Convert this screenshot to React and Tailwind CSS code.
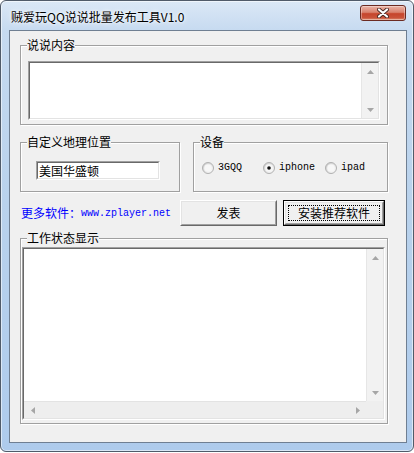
import React from "react";

const cjk = "font-['Noto_Sans_CJK_SC',sans-serif]";
const mono = "font-['Liberation_Mono','Noto_Sans_CJK_SC',monospace]";

function Arrow({ dir }) {
  const d = {
    up: "M3.5 0 L7 4 L0 4 Z",
    down: "M0 0 L7 0 L3.5 4 Z",
    left: "M4 0 L4 7 L0 3.5 Z",
    right: "M0 0 L4 3.5 L0 7 Z",
  }[dir];
  const vert = dir === "up" || dir === "down";
  return (
    <svg width={vert ? 7 : 4} height={vert ? 4 : 7} viewBox={vert ? "0 0 7 4" : "0 0 4 7"}>
      <path d={d} fill="#a6a6a6" />
    </svg>
  );
}

function VScroll() {
  return (
    <div className="w-[17px] h-full flex flex-col justify-between bg-[#f2f2f2] border-l border-[#e6e6e6]">
      <div className="h-[17px] flex items-center justify-center"><Arrow dir="up" /></div>
      <div className="h-[17px] flex items-center justify-center"><Arrow dir="down" /></div>
    </div>
  );
}

function Sunken({ className = "", children }) {
  return (
    <div className={`border border-t-[#a0a0a0] border-l-[#a0a0a0] border-r-white border-b-white ${className}`}>
      <div className="w-full h-full border border-t-[#696969] border-l-[#696969] border-r-[#e3e3e3] border-b-[#e3e3e3] bg-white">
        {children}
      </div>
    </div>
  );
}

function Group({ label, className = "", children }) {
  return (
    <div className={`relative border border-[#a0a0a0] shadow-[inset_1px_1px_0_#fff,1px_1px_0_#fff] ${className}`}>
      <span className={`absolute left-[6px] -top-[8px] bg-[#f0f0f0] text-[12px] leading-[14px] text-black ${cjk}`}>
        {label}
      </span>
      {children}
    </div>
  );
}

function Radio({ checked, label, className = "" }) {
  return (
    <div className={`flex items-center gap-[4px] ${className}`}>
      <svg width="12" height="12" viewBox="0 0 12 12">
        <defs>
          <linearGradient id={"rg" + label} x1="0" y1="0" x2="1" y2="1">
            <stop offset="0" stopColor="#c8c8c8" />
            <stop offset="1" stopColor="#ffffff" />
          </linearGradient>
        </defs>
        <circle cx="6" cy="6" r="5.5" fill={`url(#rg${label})`} stroke="#b0b0b0" />
        <circle cx="6" cy="6" r="3.8" fill="#f7f7f7" />
        {checked && <circle cx="6" cy="6" r="1.8" fill="#111" />}
      </svg>
      <span className={`text-[10px] leading-[12px] text-black ${mono}`}>{label}</span>
    </div>
  );
}

function Button({ children, isDefault }) {
  return (
    <div className={`relative h-full ${isDefault ? "border border-black" : ""}`}>
      <div className="h-full border border-t-white border-l-white border-r-[#696969] border-b-[#696969]">
        <div className={`h-full flex items-center justify-center border border-t-[#e3e3e3] border-l-[#e3e3e3] border-r-[#a0a0a0] border-b-[#a0a0a0] bg-[#f0f0f0] text-[12px] text-black ${cjk}`}>
          {children}
        </div>
      </div>
      {isDefault && <div className="absolute inset-[4px] border border-dotted border-black" />}
    </div>
  );
}

export default function App() {
  return (
    <div className="w-[414px] h-[453px] bg-white">
      <div className="relative w-[414px] h-[452px] rounded-[6px] border border-[#505b69] shadow-[inset_0_0_0_1px_rgba(255,255,255,0.55)] bg-[linear-gradient(180deg,#dbe8f6_0px,#c6daf0_30px,#b9d2ec_200px,#aecbec_100%)] flex flex-col pl-[8px] pr-[6px] pb-[8px]">
        {/* title bar */}
        <div className="h-[29px] flex items-center pl-[2px] pt-[2px]">
          <span className={`text-[12px] text-black ${cjk} [text-shadow:0_0_6px_#fff,0_0_3px_#fff]`}>
            贼爱玩QQ说说批量发布工具V1.0
          </span>
        </div>
        <div className="absolute left-[359px] top-[4px] w-[46px] h-[16px] rounded-[3px] border border-[#6b2b22] bg-[linear-gradient(180deg,#eab5a8_0%,#d9826e_45%,#c6452c_55%,#c9533a_85%,#e29a7e_100%)] shadow-[inset_0_0_0_1px_rgba(255,255,255,0.35)] flex items-center justify-center">
          <svg width="12" height="10" viewBox="0 0 12 10">
            <path d="M2 1.5 L10 8.5 M10 1.5 L2 8.5" stroke="#4a2a25" strokeWidth="4" strokeLinecap="round" />
            <path d="M2 1.5 L10 8.5 M10 1.5 L2 8.5" stroke="#ffffff" strokeWidth="2.2" strokeLinecap="round" />
          </svg>
        </div>

        {/* client area */}
        <div className="flex-1 border border-[#6f7f92] bg-[#f0f0f0] pl-[10px] pt-[14px] flex flex-col">
          <Group label="说说内容" className="w-[368px] h-[80px] pt-[15px] pl-[7px]">
            <Sunken className="w-[352px] h-[59px]">
              <div className="h-full flex justify-end">
                <VScroll />
              </div>
            </Sunken>
          </Group>

          <div className="mt-[17px] flex h-[50px]">
            <Group label="自定义地理位置" className="w-[160px] h-full pt-[18px] pl-[15px]">
              <Sunken className="w-[124px] h-[19px]">
                <div className={`h-full flex items-center pl-[1px] text-[12px] text-black ${cjk}`}>美国华盛顿</div>
              </Sunken>
            </Group>
            <Group label="设备" className="ml-[13px] w-[195px] h-full pt-[18px] pl-[8px]">
              <div className="flex h-[14px] items-center">
                <Radio label="3GQQ" className="w-[61px]" />
                <Radio label="iphone" checked className="w-[62px]" />
                <Radio label="ipad" />
              </div>
            </Group>
          </div>

          <div className="mt-[8px] flex h-[26px] items-center">
            <div className={`w-[160px] pl-[1px] text-[12px] text-[#0000ff] flex items-center ${cjk}`}>
              更多软件：<span className={`text-[10px] ${mono}`}>www.zplayer.net</span>
            </div>
            <div className="w-[97px] h-full">
              <Button>发表</Button>
            </div>
            <div className="ml-[6px] w-[102px] h-full">
              <Button isDefault>安装推荐软件</Button>
            </div>
          </div>

          <Group label="工作状态显示" className="mt-[12px] w-[368px] h-[186px] pt-[8px] pl-[1px]">
            <Sunken className="w-[363px] h-[173px]">
              <div className="h-full flex flex-col">
                <div className="flex-1 flex justify-end">
                  <VScroll />
                </div>
                <div className="h-[17px] flex">
                  <div className="flex-1 flex items-center justify-between bg-[#eeeeee] border-t border-[#e3e3e3]">
                    <div className="w-[17px] flex items-center justify-center"><Arrow dir="left" /></div>
                    <div className="w-[17px] flex items-center justify-center"><Arrow dir="right" /></div>
                  </div>
                  <div className="w-[17px] bg-[#eeeeee]" />
                </div>
              </div>
            </Sunken>
          </Group>
        </div>
      </div>
    </div>
  );
}
